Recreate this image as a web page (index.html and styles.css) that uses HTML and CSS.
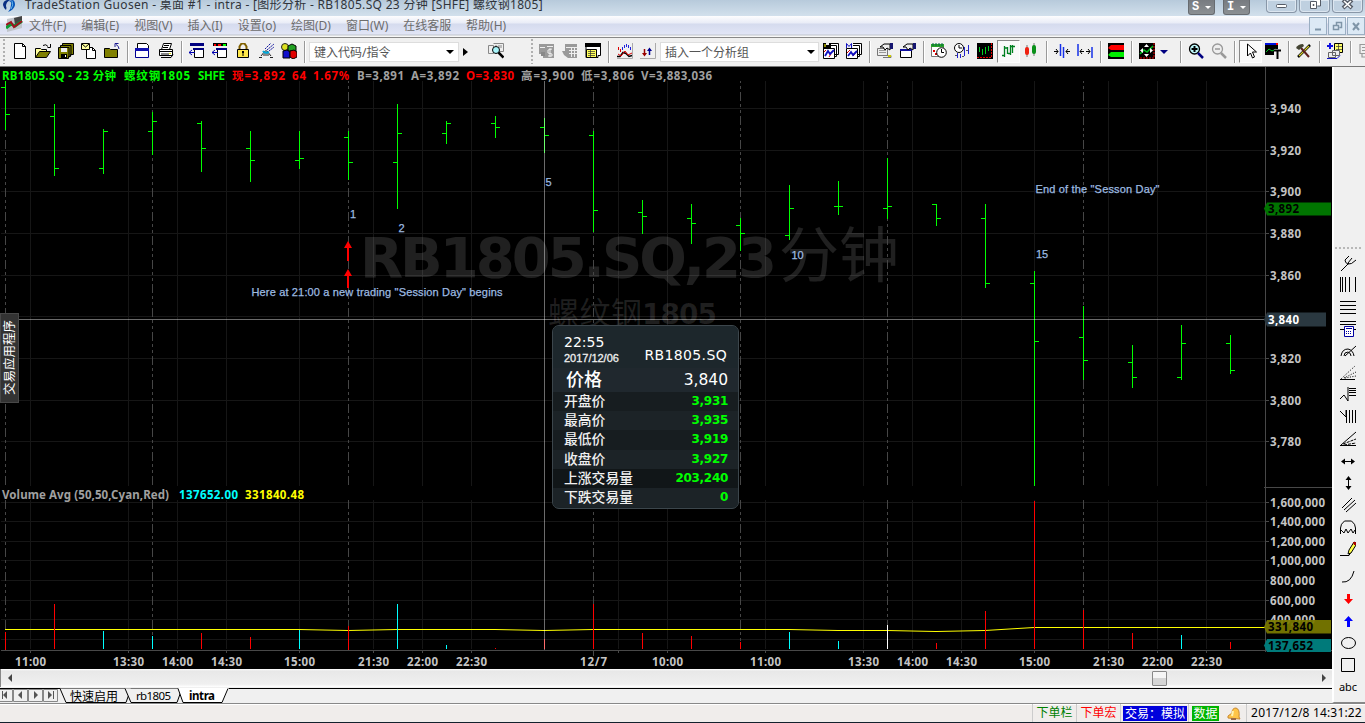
FILE: index.html
```html
<!DOCTYPE html>
<html lang="zh-CN">
<head>
<meta charset="utf-8">
<title>TradeStation Guosen</title>
<link rel="stylesheet" href="styles.css">
</head>
<body>
<div class="app">
<header class="titlebar">
<svg class="logo" width="16" height="16" viewBox="0 0 16 16"><path d="M5 0Q1 1 1 5Q2 9 4 10Q5 8 4 6Q4 2 8 0z" fill="#0a2f82"/><path d="M6 1Q10 1 9 5Q9 9 6 12Q12 10 13 5Q13 1 11 0z" fill="#0755b8"/><path d="M10 1Q12 5 9 9" fill="none" stroke="#5fb4ee"/></svg>
<span class="title">TradeStation Guosen - 桌面 #1 - intra - [图形分析 - RB1805.SQ 23 分钟 [SHFE] 螺纹钢1805]</span>
<div class="badges"><span class="badge">S<i></i></span><span class="badge">I<i></i></span></div>
<div class="winbtns">
<span class="wb"><svg width="29" height="12"><rect x="9.500" y="4.500" width="10" height="3" rx="1" fill="#fff" stroke="#555b66"/></svg></span>
<span class="wb"><svg width="29" height="12"><path d="M13.500 -1h7v7h-3M10.500 1.500h6v7h-6zM13 4.500h1v1h-1z" fill="#fff" stroke="#555b66"/></svg></span>
<span class="wb"><svg width="29" height="12"><path d="M10 0l9 8M19 0l-9 8" stroke="#555b66" stroke-width="4"/><path d="M11 1l7 6.500M18 1l-7 6.500" stroke="#fff" stroke-width="1.600"/></svg></span>
</div>
</header>
<nav class="menubar">
<svg class="mdi" width="17" height="17" viewBox="0 0 17 17"><path d="M1 3L16 0V12L1 16z" fill="#bfc4ca"/><path d="M8 2L16 0V7L9 9z" fill="#444"/><path d="M0 12l5-4 4 2 7-5" fill="none" stroke="#0b9a35" stroke-width="3"/><path d="M0 9l5-3 3 5 8-6" fill="none" stroke="#a31020" stroke-width="2"/></svg>
<span>文件(F)</span><span>编辑(E)</span><span>视图(V)</span><span>插入(I)</span><span>设置(o)</span><span>绘图(D)</span><span>窗口(W)</span><span>在线客服</span><span>帮助(H)</span>
<div class="mdibtns"><span><svg width="17" height="17"><path d="M5 11.500h6" stroke="#7f95a8" stroke-width="2"/></svg></span><span><svg width="17" height="17"><path d="M7.500 7V4.500h5v5h-2M4.500 7.500h5v4h-5z" fill="none" stroke="#7f95a8" stroke-width="1.500"/></svg></span><span><svg width="17" height="17"><path d="M5 5l6 7M11 5l-6 7" stroke="#7f95a8" stroke-width="2"/></svg></span></div>
</nav>
<div class="toolbar">
<i class="grip"></i>
<b class="t"><svg viewBox="0 0 16 16"><path d="M2.500 .500h8l3 3v12h-11z" fill="#fff" stroke="#000"/><path d="M10.500 .500v3h3" fill="none" stroke="#000"/></svg></b>
<b class="t"><svg viewBox="0 0 16 16"><path d="M.500 14.500V5.500h5l1 1h5v2" fill="#ffff9c" stroke="#000"/><path d="M.500 14.500l4-6h11l-4 6z" fill="#808000" stroke="#000"/><path d="M8 2.500q3-2 5 1M15.500 1v3.500h-3" fill="none" stroke="#000"/></svg></b>
<b class="t"><svg viewBox="0 0 16 16"><path d="M4.500 .500h11v11h-3v2h-2v2H.500v-11h2v-2h2z" fill="#808000" stroke="#000"/><path d="M3 2.500h10v10M1 4.500h10v10" fill="none" stroke="#000"/><path d="M3 5h6v4H3z" fill="#eee"/><path d="M3 11h6v4H3z" fill="#000"/><path d="M7 12h1v2H7z" fill="#fff"/></svg></b>
<b class="t"><svg viewBox="0 0 16 16"><path d="M5.500 4.500h6l3 3v8h-9z" fill="#fff" stroke="#000"/><path d="M11.500 4.500v3h3" fill="none" stroke="#000"/><path d="M.500 .500h8v6h-8z" fill="#ffffa0" stroke="#000"/><path d="M1 1l3.500 3L8 1" fill="none" stroke="#000"/></svg></b>
<b class="t"><svg viewBox="0 0 16 16"><path d="M.500 14.500v-9h5l1 1h7v8z" fill="#808000" stroke="#000"/><path d="M15 6q0-3-3-4.500M11 4V.500h3.500" fill="none" stroke="#1a1a90"/></svg></b>
<i class="sep"></i>
<b class="t"><svg viewBox="0 0 16 16"><path d="M2.500 .500h9l2 2v11h-11z" fill="#fff" stroke="#000"/><path d="M.500 5.500h13v9H.500z" fill="#fff" stroke="#000090"/><path d="M0 5h14v3H0z" fill="#1010b0"/></svg></b>
<b class="t"><svg viewBox="0 0 16 16"><path d="M5.500 .500h8l-2 6h-8zM1.500 6.500h13v6h-13z" fill="#fff" stroke="#000"/><path d="M6 2.500h5M5 4.500h5M2 8.500h12M3 14.500h10l2-3" fill="none" stroke="#000"/><path d="M3 10h8v2H3z" fill="#888"/><path d="M11 10h2v1h-2z" fill="#dd0"/></svg></b>
<i class="sep"></i>
<b class="t"><svg viewBox="0 0 16 16"><path d="M1 0h14v3H1z" fill="#000080"/><path d="M5.500 5.500h9v9h-9z" fill="#fff" stroke="#000"/><path d="M4 5h11v2H4z" fill="#000080"/><path d="M0 9.500h6M3 7l-3 2.500L3 12" fill="none" stroke="#0000b0"/></svg></b>
<b class="t"><svg viewBox="0 0 16 16"><path d="M1 0h14v3H1z" fill="#000"/><path d="M2 1h2v2H2z" fill="#f00"/><path d="M6 1h3v2H6z" fill="#f00"/><path d="M11 1h3v2h-3z" fill="#0f0"/><path d="M5.500 5.500h9v9h-9z" fill="#fff" stroke="#000"/><path d="M4 5h11v2H4z" fill="#000080"/><path d="M0 9.500h6M3 7l-3 2.500L3 12" fill="none" stroke="#0000b0"/></svg></b>
<b class="t"><svg viewBox="0 0 16 16"><path d="M4.500 6V3.500l2-3h3l2 3V6" fill="none" stroke="#806000" stroke-width="2"/><path d="M2.500 6.500h11v8h-11z" fill="#ffe84a" stroke="#000"/><path d="M7 8h2v2H7zM7.500 10h1v3h-1z"/></svg></b>
<b class="t"><svg viewBox="0 0 16 16"><path d="M1 14.500h3M12 14.500h3M3 13l4-5h2l4 5M5 12h6M6 10h4" fill="none" stroke="#222"/><path d="M5 8q2 3 6 1" fill="none" stroke="#0ad" stroke-width="2"/><path d="M7 6l6-6M9 7l7-6M11 8l5-4" stroke="#1518a0" stroke-dasharray="2 .7"/></svg></b>
<b class="t"><svg viewBox="0 0 16 16"><circle cx="4" cy="4" r="3.500" fill="#dce020" stroke="#222"/><path d="M7 3l4-2 4 2v5H7z" fill="#21a021" stroke="#000"/><path d="M2 8l4-1 3 2v6H2z" fill="#1010cc" stroke="#000"/><path d="M9 8l4-1 3 2v5l-4 2-3-2z" fill="#e00000" stroke="#000"/></svg></b>
<i class="sep"></i>
<div class="field"><span>键入代码/指令</span><i></i></div>
<b class="play"></b>
<b class="t find"><svg viewBox="0 0 16 16"><path d="M.500 2.500h5v8h-5zM5.500 .500h10v8h-5" fill="#eee" stroke="#888"/><path d="M8 2v3M11 2v3M13 2v3" stroke="#888"/><circle cx="8" cy="7" r="3.500" fill="#a8f4fa" stroke="#000"/><path d="M10.500 9.500l5 5" stroke="#000" stroke-width="2.500"/></svg></b>
<i class="grip grip2"></i>
<b class="t"><svg viewBox="0 0 16 16"><path d="M0 1h15v14H4v-4H0z" fill="#999"/><path d="M1 4.500h5M8 3.500h6M13 6l-4 1v3l4 1v2H9M11 5v9" fill="none" stroke="#eee"/><path d="M2 9h4v4H2z" fill="#888"/></svg></b>
<b class="t"><svg viewBox="0 0 16 16"><path d="M3 1h12v14H6l-4-3-2-4h3z" fill="#999"/><path d="M4 4.500h11M7 7.500h8M7 10.500h8M9.500 5v9M12.500 5v9" stroke="#eee"/></svg></b>
<b class="t"><svg viewBox="0 0 16 16"><path d="M1 .500h14.500v12H13v2H1z" fill="#fff" stroke="#000"/><path d="M0 0h16v4H0z"/><path d="M1.500 6.500h10v8h-10z" fill="#ffff58" stroke="#000"/><path d="M3 8.500h7M3 10.500h7M3 12.500h7M5.500 7v7" stroke="#333" stroke-width=".7"/></svg></b>
<i class="sep s9"></i>
<b class="t"><svg viewBox="0 0 16 16"><path d="M5.500 4v3M7.500 2v3M9.500 1v3M11.500 2v3M13.500 4v3" stroke="#2222dd"/><path d="M1.500 4v3M3.500 6v3" stroke="#d00"/><path d="M0 13.500h3l3-4 3 1 3 3 3-1" fill="none" stroke="#000" stroke-width="1.500"/><path d="M1 11l3 2 4-5 3 4 4-2" fill="none" stroke="#d00"/><path d="M15.500 0v15.500H0" fill="none" stroke="#aaa"/></svg></b>
<b class="t"><svg viewBox="0 0 16 16"><path d="M4.500 6v6" stroke="#900" stroke-width="1.500"/><path d="M2 10h5l-2.500 3.500z" fill="#900"/><path d="M9.500 6v6" stroke="#000090" stroke-width="1.500"/><path d="M7 8l2.500-3.500L12 8z" fill="#000090"/><path d="M15.500 0v15.500H0" fill="none" stroke="#aaa"/></svg></b>
<div class="field f2"><span>插入一个分析组</span><i></i></div>
<b class="t"><svg viewBox="0 0 16 16"><path d="M6 .500h9.500v11H6M4 2.500h9.500v11H4" fill="#fff" stroke="#000"/><path d="M.500 5.500h11v10H.500z" fill="#fff" stroke="#000"/><path d="M0 0h8v6H0z" fill="#000"/><path d="M1 1h2v3H1z" fill="#880"/><path d="M3 0h3v2H3z" fill="#eee"/><path d="M1 9l2-2M6 14l2-3" stroke="#d00"/><path d="M2 13l3-5 2 3 4-4" fill="none" stroke="#1010c0" stroke-width="1.800"/></svg></b>
<b class="t"><svg viewBox="0 0 16 16"><path d="M6 .500h9.500v11H6M4 2.500h9.500v11H4" fill="#fff" stroke="#000"/><path d="M.500 5.500h11v10H.500z" fill="#fff" stroke="#000"/><path d="M0 0h7v5H0z" fill="#f0f0f0"/><path d="M.500 5V.500l2.500 3 2.500-3V5" fill="none" stroke="#1010c0"/><path d="M1 10l3-3M7 13l3-4" stroke="#d00"/><path d="M2 13l3-4 2 3 4-4" fill="none" stroke="#1010c0" stroke-width="1.800"/></svg></b>
<i class="sep"></i>
<b class="t"><svg viewBox="0 0 16 16"><path d="M.500 5.500h10v7H.500zM6 12.500h8v2H6" fill="#eee" stroke="#777"/><path d="M2 7.500h7M2 9.500h7" stroke="#999"/><path d="M3 4l4-3h6v6l-3-2-2 2-2-3z" fill="#eee" stroke="#000"/><path d="M13 0h3v6h-3z" fill="#151570"/><path d="M11 12h3v2h-3z" fill="#cc0"/></svg></b>
<b class="t"><svg viewBox="0 0 16 16"><path d="M.500 6.500h11v8H.500z" fill="#fff" stroke="#000"/><path d="M0 6h12v2H0z" fill="#1010a0"/><path d="M3 4l4-3h6v6l-3-2-2 2-2-3z" fill="#eee" stroke="#000"/><path d="M13 0h3v6h-3z" fill="#151570"/></svg></b>
<i class="sep"></i>
<b class="t"><svg viewBox="0 0 16 16"><path d="M.500 2.500h12v11H.500z" fill="#fff" stroke="#777"/><path d="M0 1h13v3H0z" fill="#29a229"/><path d="M2 7h2v2H2zM4 10h2v2H4z" fill="#d00"/><path d="M2 0v3M5 0v3M8 0v3M11 0v3" stroke="#064"/><circle cx="10.500" cy="9.500" r="4.800" fill="#fff" stroke="#000"/><path d="M10.500 6v3.500H13" fill="none" stroke="#000"/></svg></b>
<b class="t"><svg viewBox="0 0 16 16"><circle cx="5" cy="5" r="4.500" fill="#fff" stroke="#000"/><path d="M5 2v3h3" fill="none" stroke="#000"/><path d="M3.500 10v5M6.500 11v4M10.500 4v9M14.500 2v9" stroke="#2222d0"/><path d="M1 12.500h2M8 13.500h2M12 7.500h2" stroke="#555"/></svg></b>
<b class="t"><svg viewBox="0 0 16 16"><path d="M0 0h16v16H0z"/><path d="M2.500 4v5M5.500 6v6M8.500 4v7M11.500 3v5" stroke="#00d020"/><path d="M14.500 0v14.500H0" fill="none" stroke="#e00" stroke-dasharray="2 1"/></svg></b>
<b class="t on"><svg viewBox="0 0 16 16"><path d="M4.500 3v11M2 12.500h2M4.500 5h3M7.500 4v7M10.500 2v10M8 10.500h2M12.500 2v8M10 3.500h5" fill="none" stroke="#008020" stroke-width="1.300"/></svg></b>
<b class="t"><svg viewBox="0 0 16 16"><path d="M4 2v12M11 0v13" stroke="#777"/><rect x="2" y="4" width="4" height="8" rx="2" fill="#f02010"/><rect x="9" y="2" width="4" height="9" rx="2" fill="#089018"/></svg></b>
<i class="sep"></i>
<b class="t"><svg viewBox="0 0 16 16"><path d="M6.500 1v12M9.500 4v11" stroke="#1530e8" stroke-width="1.500"/><path d="M0 8.500h4M12 8.500h4M2 6l2 2.500L2 11M14 6l-2 2.500 2 2.500" fill="none" stroke="#000"/></svg></b>
<b class="t"><svg viewBox="0 0 16 16"><path d="M1 1v12M15 4v11" stroke="#1530e8" stroke-width="1.500"/><path d="M3 8.500h4M9 8.500h4M5 6L3 8.500 5 11M11 6l2 2.500-2 2.500" fill="none" stroke="#000"/></svg></b>
<i class="sep"></i>
<b class="t"><svg viewBox="0 0 16 16"><path d="M0 0h16v16H0z"/><path d="M0 5l3-3h13v5H3z" fill="#f00"/><path d="M0 12l3-3h13v5H3z" fill="#00ee00"/></svg></b>
<i class="sep"></i>
<b class="t"><svg viewBox="0 0 16 16"><path d="M0 0h16v16H0z"/><path d="M1 11l4-4 3 2 6-6" fill="none" stroke="#00c020" stroke-width="1.500"/><path d="M7.500 1l2.500 3H5zM7.500 14L5 11h5zM1 7.500L4 5v5zM14 7.500L11 5v5z" fill="#fff"/><path d="M15 0v15H0" fill="none" stroke="#e00" stroke-dasharray="2 1"/></svg></b>
<b class="drop"></b>
<i class="sep"></i>
<b class="t"><svg viewBox="0 0 16 16"><circle cx="6.500" cy="6" r="5" fill="#bdf8fa" stroke="#000" stroke-width="1.300"/><path d="M3.500 6h6M6.500 3v6" stroke="#000" stroke-width="2"/><path d="M10 10l5 5" stroke="#000080" stroke-width="2.500"/></svg></b>
<b class="t"><svg viewBox="0 0 16 16"><circle cx="6.500" cy="6" r="5" fill="#eee" stroke="#999" stroke-width="1.300"/><path d="M4 6h5" stroke="#999" stroke-width="1.500"/><path d="M10 10l5 5" stroke="#999" stroke-width="2.500"/></svg></b>
<i class="sep"></i>
<b class="t on"><svg viewBox="0 0 16 16"><path d="M5.500 1v12l3-3 2 5 2-1-2-5h4z" fill="#fff" stroke="#000"/></svg></b>
<b class="t"><svg viewBox="0 0 16 16"><path d="M0 1h13v11H0z"/><path d="M0 0h13v2H0z" fill="#0010e0"/><path d="M11 0h2v2h-2z" fill="#f00"/><path d="M1 9l3-3 3 2 4-2" fill="none" stroke="#00c020"/><path d="M9 6h7v10H9z" fill="#f0f0f0"/><path d="M9 7.500h7M12.500 7v9" stroke="#000" stroke-width="2"/></svg></b>
<i class="sep"></i>
<b class="t"><svg viewBox="0 0 16 16"><path d="M14 2L2 14" stroke="#000" stroke-width="2.500"/><path d="M13 3L3 13" stroke="#d8d030" stroke-width="1.200"/><path d="M5 5l8 9" stroke="#5c2020" stroke-width="2"/><path d="M0 5q2-4 7-4l1 2-5 4z" fill="#443"/></svg></b>
<i class="sep"></i>
<b class="t"><svg viewBox="0 0 16 16"><path d="M7.500 .500h8v9h-8z" fill="#ffff68" stroke="#000"/><path d="M9 3.500h6M9 6.500h6M11.500 1v8" stroke="#333" stroke-width=".7"/><path d="M5.500 7.500h7v5h-7zM1.500 9.500h7v5h-7z" fill="#eee" stroke="#666"/><path d="M0 15.500h10l3-3" fill="none" stroke="#1010c0"/><path d="M3 0v6M0 3h6" stroke="#1010e0" stroke-width="2"/></svg></b>
<i class="sep s9"></i>
<b class="t cut"><svg viewBox="0 0 16 16"><path d="M1 1.500h14v9H1zM3 4.500h11M3 7.500h11M7.500 2v9M3 10v4h10" fill="none" stroke="#999" stroke-width="1.200"/></svg></b>
</div>
<div class="workspace">
<main class="panel">
<div class="chartbox">
<svg class="chart" width="1332" height="602" viewBox="0 67 1332 602">
<rect y="67" width="1332" height="602"/>
<path class="grid" d="M1 108.500H1265M1 150.500H1265M1 191.500H1265M1 233.500H1265M1 275.500H1265M1 316.500H1265M1 358.500H1265M1 400.500H1265M1 441.500H1265M1 502.500H1265M1 521.500H1265M1 541.500H1265M1 560.500H1265M1 580.500H1265M1 600.500H1265M1 619.500H1265M1 639.500H1265"/>
<path class="grid" d="M30.500 81V486M128.500 81V486M177.500 81V486M226.500 81V486M299.500 81V486M373.500 81V486M422.500 81V486M471.500 81V486M618.500 81V486M667.500 81V486M765.500 81V486M863.500 81V486M912.500 81V486M961.500 81V486M1034.500 81V486M1108.500 81V486M1157.500 81V486M1206.500 81V486M30.500 500V649M128.500 500V649M177.500 500V649M226.500 500V649M299.500 500V649M373.500 500V649M422.500 500V649M471.500 500V649M618.500 500V649M667.500 500V649M765.500 500V649M863.500 500V649M912.500 500V649M961.500 500V649M1034.500 500V649M1108.500 500V649M1157.500 500V649M1206.500 500V649"/>
<g class="mark"><text x="360" y="277" font-size="56" textLength="417">RB1805.SQ,23</text><text class="thin" x="779" y="277" font-size="60" textLength="120">分钟</text><text class="thin" x="548" y="324" font-size="31" textLength="94">螺纹钢</text><text x="642" y="324" font-size="28" textLength="75">1805</text></g>
<path class="dash d1" d="M5.500 81V486M152.500 81V486M348.500 81V486M593.500 81V486M740.500 81V486M887.500 81V486M1083.500 81V486"/>
<path class="dash" d="M5.500 500V649M152.500 500V649M348.500 500V649M593.500 500V649M740.500 500V649M887.500 500V649M1083.500 500V649"/>
<path class="axis" d="M1265.500 67V652M1264 487.500H1332M1 650.500H1332M30.500 651v2M128.500 651v2M177.500 651v2M226.500 651v2M299.500 651v2M373.500 651v2M422.500 651v2M471.500 651v2M593.500 651v5M618.500 651v2M667.500 651v2M765.500 651v2M863.500 651v2M912.500 651v2M961.500 651v2M1034.500 651v2M1108.500 651v2M1157.500 651v2M1206.500 651v2M1266 108.500h3M1266 150.500h3M1266 191.500h3M1266 233.500h3M1266 275.500h3M1266 358.500h3M1266 400.500h3M1266 441.500h3M1266 502.500h3M1266 521.500h3M1266 541.500h3M1266 560.500h3M1266 580.500h3M1266 600.500h3"/>
<path class="bars" d="M5.500 81V130M1 87.500h5M5 114.500h5M54.500 104V176M50 116.500h5M54 168.500h5M103.500 129V174M99 168.500h5M103 131.500h5M152.500 112V155M148 131.500h5M152 121.500h5M201.500 121V172M197 123.500h5M201 148.500h5M250.500 131V182M246 148.500h5M250 160.500h5M299.500 131V169M295 160.500h5M299 158.500h5M348.500 131V180M344 137.500h5M348 162.500h5M397.500 104V209M393 162.500h5M397 133.500h5M446.500 121V144M442 133.500h5M446 123.500h5M495.500 116V138M491 123.500h5M495 127.500h5M544.500 118V153M540 127.500h5M544 135.500h5M593.500 131V232M589 135.500h5M593 210.500h5M642.500 200V234M638 212.500h5M642 216.500h5M691.500 204V244M687 218.500h5M691 223.500h5M740.500 218V251M736 225.500h5M740 233.500h5M789.500 185V240M785 235.500h5M789 208.500h5M838.500 181V215M834 206.500h9M887.500 158V219M883 208.500h5M887 206.500h5M936.500 204V226M932 204.500h5M936 218.500h5M985.500 204V288M981 218.500h5M985 283.500h5M1034.500 271V486M1030 283.500h5M1034 341.500h5M1083.500 306V380M1079 337.500h5M1083 360.500h5M1132.500 345V388M1128 362.500h5M1132 377.500h5M1181.500 325V380M1177 377.500h5M1181 343.500h5M1230.500 335V374M1226 343.500h5M1230 370.500h5"/>
<path class="avg" d="M5 629.500H299L348 630.500L397 629.500H495L544 630.500L593 629.500H789L838 630.500H887L936 631.500L985 630.500L1034 627.500H1265"/>
<path class="down" d="M5.500 632V650M54.500 604V649M201.500 633V649M250.500 637V649M348.500 626V650M495.500 648V649M593.500 604V649M642.500 633V649M691.500 636V649M740.500 642V649M936.500 643V649M985.500 611V649M1034.500 501V649M1083.500 610V649M1132.500 633V649M1230.500 642V649M544.500 639V649"/>
<path class="up" d="M103.500 631V649M152.500 636V649M299.500 630V649M397.500 604V649M446.500 645V649M789.500 632V649M838.500 641V649M1181.500 635V649"/>
<path d="M887.500 625V649" stroke="#fff"/>
<path class="cross" d="M544.500 81V650M7 319.500H1265"/>
<path d="M348 241l4 7h-3v13h-2v-13h-3zM348 269l4 7h-3v12h-2v-12h-3z" fill="#f00"/>
<g class="head"><text fill="#0f0" x="2" y="80" textLength="114">RB1805.SQ - 23 分钟</text><text fill="#0f0" x="124" y="80" textLength="66">螺纹钢1805</text><text fill="#0f0" x="198" y="80" textLength="27">SHFE</text><text fill="#f00" x="232" y="80" textLength="53">现=3,892</text><text fill="#f00" x="292" y="80" textLength="14">64</text><text fill="#f00" x="313" y="80" textLength="36">1.67%</text><text x="357" y="80" textLength="47">B=3,891</text><text x="411" y="80" textLength="48">A=3,892</text><text fill="#f00" x="466" y="80" textLength="48">O=3,830</text><text x="521" y="80" textLength="53">高=3,900</text><text x="581" y="80" textLength="53">低=3,806</text><text x="641" y="80" textLength="71">V=3,883,036</text>
<text x="2" y="499" textLength="167">Volume Avg (50,50,Cyan,Red)</text><text x="179" y="499" fill="#0ff" textLength="59">137652.00</text><text x="245" y="499" fill="#ff0" textLength="59">331840.48</text></g>
<g class="note"><text x="350" y="218">1</text><text x="398.500" y="232">2</text><text x="545.500" y="186">5</text><text x="791.500" y="259">10</text><text x="1036" y="258">15</text><text x="251.500" y="296" textLength="251">Here at 21:00 a new trading "Session Day" begins</text><text x="1035.500" y="193" textLength="124">End of the "Sesson Day"</text></g>
<g class="lab"><text x="1270" y="113" textLength="31">3,940</text><text x="1270" y="155" textLength="31">3,920</text><text x="1270" y="196" textLength="31">3,900</text><text x="1270" y="238" textLength="31">3,880</text><text x="1270" y="280" textLength="31">3,860</text><text x="1270" y="363" textLength="31">3,820</text><text x="1270" y="405" textLength="31">3,800</text><text x="1270" y="446" textLength="31">3,780</text><text x="1270" y="507" textLength="55">1,600,000</text><text x="1270" y="526" textLength="55">1,400,000</text><text x="1270" y="546" textLength="55">1,200,000</text><text x="1270" y="565" textLength="55">1,000,000</text><text x="1270" y="585" textLength="45">800,000</text><text x="1270" y="605" textLength="45">600,000</text><text x="1270" y="624" textLength="45">400,000</text>
<text x="15" y="666" textLength="31">11:00</text><text x="113" y="666" textLength="31">13:30</text><text x="162" y="666" textLength="31">14:00</text><text x="211" y="666" textLength="31">14:30</text><text x="284" y="666" textLength="31">15:00</text><text x="358" y="666" textLength="31">21:30</text><text x="407" y="666" textLength="31">22:00</text><text x="456" y="666" textLength="31">22:30</text><text x="580" y="666" textLength="27">12/7</text><text x="652" y="666" textLength="31">10:00</text><text x="750" y="666" textLength="31">11:00</text><text x="848" y="666" textLength="31">13:30</text><text x="897" y="666" textLength="31">14:00</text><text x="946" y="666" textLength="31">14:30</text><text x="1019" y="666" textLength="31">15:00</text><text x="1093" y="666" textLength="31">21:30</text><text x="1142" y="666" textLength="31">22:00</text><text x="1191" y="666" textLength="31">22:30</text></g>
<path d="M1264 208.500l3-6h64v13h-64z" fill="#007400"/><path d="M1264 319.500l3-7h59v14h-59z" fill="#2a3840"/><path d="M1264 627l3-7h64v13.500h-64z" fill="#7a7a00" fill-opacity=".93"/><path d="M1264 645.500l3-6.500h64v13h-64z" fill="#007a7a"/>
<g class="lab tag"><text x="1268" y="213" textLength="31">3,892</text><text x="1268" y="324" textLength="31" class="w">3,840</text><text x="1268" y="631" textLength="45">331,840</text><text x="1268" y="650" textLength="45">137,652</text></g>
</svg>
<div class="sidetab"><span>交易应用程序</span></div>
<section class="tip">
<div class="tip-head"><div><div class="time">22:55</div><div class="date">2017/12/06</div></div><div class="sym">RB1805.SQ</div></div>
<div class="tip-price"><span>价格</span><span class="num">3,840</span></div>
<div class="r"><span>开盘价</span><em>3,931</em></div>
<div class="r alt"><span>最高价</span><em>3,935</em></div>
<div class="r"><span>最低价</span><em>3,919</em></div>
<div class="r alt"><span>收盘价</span><em>3,927</em></div>
<div class="r dk"><span>上涨交易量</span><em>203,240</em></div>
<div class="r alt"><span>下跌交易量</span><em>0</em></div>
</section>
</div>
<div class="hscroll"><i class="la"></i><i class="thumb"></i><i class="ra"></i></div>
<svg class="tabs" width="1332" height="16" viewBox="0 687 1332 16">
<rect y="687" width="1332" height="16" fill="#f0f0f0"/><path d="M0 688.500H1332" stroke="#000"/>
<g fill="#f0f0f0" stroke="#888"><path d="M-2.500 689.500h15v12h-15zM13.500 689.500h14v12h-14zM28.500 689.500h14v12h-14zM43.500 689.500h14v12h-14z"/></g>
<path d="M7 691v8l-4-4zM22 691v8l-4-4zM34 691v8l4-4zM48 691v8l4-4z" fill="#555"/><path d="M2.500 691v8M53.500 691v8" stroke="#555"/>
<path d="M60 688.500l6 14h60l5-14" fill="#f0f0f0" stroke="#000"/><path d="M125 688.500l6 14h46l5-14" fill="#f0f0f0" stroke="#000"/><path d="M178 688l5 14.500h39l7-14.500z" fill="#fff"/><path d="M178 688.500l5 14h39l6-14" fill="none" stroke="#000"/>
<text x="70" y="700.500" textLength="48">快速启用</text><text x="136" y="700" font-size="11.500" textLength="35">rb1805</text><text x="189" y="700" font-size="11.500" font-weight="700" textLength="26">intra</text>
</svg>
</main>
<aside class="rail"><i class="dots"></i>
<b><svg viewBox="0 0 16 16"><path d="M1 16l8-8M9 1L5 5q0 3 3 4 3 1 8-4M12 3L8 8" fill="none" stroke="#000"/></svg></b>
<b><svg viewBox="0 0 16 16"><path d="M.500 0v15M2.500 0v15M5.500 0v15M9.500 0v15M15.500 0v15" stroke="#000"/></svg></b>
<b><svg viewBox="0 0 16 16"><path d="M0 2.500h16M0 6.500h16M0 10.500h16M0 14.500h16" stroke="#000"/></svg></b>
<b><svg viewBox="0 0 16 16"><path d="M0 .500h16M0 3.500h16M0 8.500h16" stroke="#000"/><path d="M4.500 5.500h9v10h-9z" fill="#fff" stroke="#0000a0"/><path d="M6 7.500h6" stroke="#0000a0"/><path d="M6 10.500h6M6 12.500h6" stroke="#0000a0" stroke-dasharray="1 1"/></svg></b>
<b><svg viewBox="0 0 16 16"><path d="M1 13q1-7 7-7 5 1 6 7M4 13q0-4 4-4 3 1 3 4M5 13L16 3" fill="none" stroke="#000"/></svg></b>
<b><svg viewBox="0 0 16 16"><path d="M0 14.500h15" stroke="#000"/><path d="M1 14L15 1M4 13l12-6M5 13l11-2" stroke="#000" stroke-dasharray="1 1.500"/></svg></b>
<b><svg viewBox="0 0 16 16"><path d="M0 12l4-4 4 6V0" fill="none" stroke="#000"/><path d="M9 1.500h7M9 3.500h7M9 5.500h7M9 8.500h7" stroke="#000"/></svg></b>
<b><svg viewBox="0 0 16 16"><path d="M0 2l6 6V1M6.500 1v13M9.500 1v13M12.500 1v13M15.500 1v13" fill="none" stroke="#000"/></svg></b>
<b><svg viewBox="0 0 16 16"><path d="M0 14.500h16M1 14L16 1" stroke="#000"/><path d="M3 13l13-5M4 14l12-2" stroke="#000" stroke-dasharray="3 1"/></svg></b>
<b><svg viewBox="0 0 16 16"><path d="M2 8.500h12" stroke="#000"/><path d="M1 8.500l4-3v6zM15 8.500l-4-3v6z"/></svg></b>
<b><svg viewBox="0 0 16 16"><path d="M8.500 2v12" stroke="#000"/><path d="M8.500 1l3 4h-6zM8.500 15l3-4h-6z"/></svg></b>
<b><svg viewBox="0 0 16 16"><path d="M2 11L12 1M4 13L15 3M6 15L16 6" stroke="#000"/></svg></b>
<b><svg viewBox="0 0 16 16"><path d="M.500 15V9q0-4 4-7h7q4 3 4 7v6M1 11l3 3 2-4 2 4 3-4 2 4 2-3" fill="none" stroke="#000"/></svg></b>
<b><svg viewBox="0 0 16 16"><path d="M0 14.500h9l2-4" fill="none" stroke="#000"/><path d="M8 13l1-4 5-8 2 1v2l-5 8z" fill="#ff4" stroke="#000"/><path d="M13 1h3v3h-2z" fill="#a00"/></svg></b>
<b class="gap"><svg viewBox="0 0 16 16"><path d="M2 14q9 1 12-11" fill="none" stroke="#000"/></svg></b>
<b><svg viewBox="0 0 16 16"><path d="M7 4h3v5h3l-4.500 5L4 9h3z" fill="#f00"/></svg></b>
<b><svg viewBox="0 0 16 16"><path d="M7 15h3V9h3L8.500 4 4 9h3z" fill="#00f"/></svg></b>
<b><svg viewBox="0 0 16 16"><ellipse cx="8.500" cy="9" rx="7" ry="5.500" fill="none" stroke="#000"/></svg></b>
<b><svg viewBox="0 0 16 16"><path d="M1.500 2.500h13v13h-13z" fill="none" stroke="#000"/></svg></b>
<b class="abc">abc</b>
</aside>
</div>
<footer class="status"><span class="g">下单栏</span><span class="rd">下单宏</span><span class="bl"><b>交易：模拟</b></span><span class="gr"><b>数据</b></span><span class="bell"><svg width="14" height="13" viewBox="0 0 14 13"><path d="M1 9l4-3q0-5 4-5 4 1 3 9l1 2-12-1z" fill="#ffc548" stroke="#c88830"/><path d="M6 4l-1 5" stroke="#fff3b0" stroke-width="2"/><path d="M4 11h5v2H4z" fill="#9a6a48"/></svg></span><span class="clock">2017/12/8 14:31:22</span></footer>
</div>
</body>
</html>
```
FILE: styles.css
```css
*{box-sizing:border-box}
body{margin:0;background:#f0f0f0;font-family:"Noto Sans","Noto Sans CJK SC",sans-serif}
svg{display:block}
.app{width:1365px;height:723px;display:flex;flex-direction:column;overflow:hidden}
.titlebar{height:16px;flex:none;display:flex;align-items:flex-start;background:linear-gradient(#b7cadb,#d2e0ec);overflow:hidden;padding-left:2px}
.title{font-size:12px;line-height:16px;height:16px;margin:-3px 0 0 7px;color:#30343a;white-space:nowrap;letter-spacing:.31px}
.badges{display:flex;gap:8px;margin-left:auto;margin-right:16px}
.badge{width:27px;height:15px;background:linear-gradient(#777b80,#8b9093);border:1px solid #676b70;border-top:0;border-radius:0 0 3px 3px;color:#fff;font:bold 12px/13px "Liberation Mono",monospace;display:flex;justify-content:center;align-items:center;gap:6px}
.badge i{border:3px solid transparent;border-top-color:#fff;border-bottom:0}
.winbtns{display:flex;gap:2px;margin-right:2px}
.wb{width:31px;height:13px;border:1px solid #8997a8;border-top:0;border-radius:0 0 4px 4px;background:#bfd0e0;box-shadow:inset 0 0 0 1px #dce6f0}
.menubar{height:21px;flex:none;display:flex;align-items:center;gap:15px;padding-left:6px;background:linear-gradient(#fdfdfe 0,#e9ecf7 7px,#d5dbee 8px,#e1e5f6 18px,#bfc4cc 19px,#f8f8f8 20px);font-size:12px;color:#6d6d6d;white-space:nowrap}
.menubar>span{line-height:18px;letter-spacing:0;margin-right:-.1px;margin-top:-1px}
.mdi{margin-right:-9px;margin-top:-4px}
.mdibtns{display:flex;gap:1px;margin-left:auto;align-self:flex-start;margin-top:1px}
.mdibtns span{width:18px;height:18px;border:1px solid #9aaec2;background:#dce9f5}
.toolbar{height:30px;flex:none;display:flex;align-items:center;background:#f0f0f0;border-top:1px solid #888;border-bottom:1px solid #777;padding:0 0 1px 3px}
.grip{width:2px;height:25px;margin-right:4px;background:repeating-linear-gradient(#b0b0b0 0 2px,#f0f0f0 2px 4px);flex:none}
.toolbar .grip2{margin:0 3px 0 23px}
.t{width:23px;height:23px;flex:none;display:flex;align-items:center;justify-content:center}
.t svg{width:16px;height:16px;flex:none;position:relative;left:-.5px;top:-.5px}
.on{background:#fafafa;border:1px solid;border-color:#888 #fff #fff #888}
.sep{width:8px;height:22px;flex:none;background:linear-gradient(90deg,transparent 3px,#999 3px 4px,#fff 4px 5px,transparent 5px)}
.s9{width:9px}
.field{width:150px;height:20px;flex:none;background:#fff;border:1px solid #ddd;display:flex;align-items:center;justify-content:space-between;padding:0 4px;font-size:12px;color:#555}
.field i{border:4px solid transparent;border-top-color:#000;border-bottom:0}
.f2{width:159px;margin-right:1px;padding-right:3px}
.play{margin-left:4px;border:4px solid transparent;border-left:5px solid #000;border-right:0}
.find{margin-left:17px}
.drop{width:8px;margin:0 9px 0 1px;border:4px solid transparent;border-top-color:#000080;border-bottom:0}
.cut{width:13px;overflow:hidden;justify-content:flex-start;padding-left:3px}
.workspace{display:flex;height:636px;flex:none}
.panel{width:1332px;flex:none;display:flex;flex-direction:column}
.chartbox{position:relative;height:602px;border-left:1px solid #888}
.chart{margin-left:-1px}
.grid{fill:none;stroke:#161616}
.dash{fill:none;stroke:#464646;stroke-dasharray:9 3 3 3 3 3}
.d1{stroke-dashoffset:13}
.axis{fill:none;stroke:#484848}
.bars{fill:none;stroke:#0f0}
.avg{fill:none;stroke:#ff0}
.down{fill:none;stroke:#f00}
.up{fill:none;stroke:#0ff}
.cross{fill:none;stroke:#fff;stroke-opacity:.42}
.mark{fill:#fff;fill-opacity:.125;font-family:"DejaVu Sans","Noto Sans CJK SC",sans-serif;font-weight:700}
.mark .thin{font-family:"Noto Sans CJK SC",sans-serif;font-weight:400}
.head{font-size:11.5px;font-weight:700;fill:#a0a0a0}
.note{font:11px "Liberation Sans",sans-serif;fill:#9dbbe0;stroke:#9dbbe0;stroke-width:.25}
.lab{font-size:11.5px;font-weight:700;fill:#c4c4c4}
.tag{fill:#000}
.w{fill:#fff}
.sidetab{position:absolute;left:-1px;top:246px;width:19px;height:90px;background:#333;border:1px solid #484848;color:#fff;display:flex;align-items:center;justify-content:center;font-size:12.5px}
.sidetab span{writing-mode:vertical-rl;text-orientation:sideways;transform:rotate(180deg);white-space:nowrap;line-height:16px}
.tip{position:absolute;left:551px;top:258px;width:187px;height:184px;border:1px solid #3c464c;border-radius:7px;background:#192125;color:#f0f0f0;overflow:hidden;font-family:"DejaVu Sans","Noto Sans CJK SC",sans-serif}
.tip-head{height:42px;background:#1d272c;display:flex;justify-content:space-between;padding:8px 11px 0 11px}
.time{font-size:14px;line-height:16px;color:#fff}
.date{font:500 11px/16px "Liberation Sans",sans-serif;letter-spacing:-.02px;-webkit-text-stroke:.3px #eee}
.sym{font-size:14px;line-height:16px;margin-top:13px;letter-spacing:.35px;color:#fff}
.tip-price{height:24px;background:#20282e;display:flex;justify-content:space-between;align-items:center;padding:0 10px 0 13px;font-size:18px;line-height:24px;font-weight:500;color:#fff}
.tip-price .num{font-size:15.5px;font-weight:400}
.r{height:19.2px;display:flex;justify-content:space-between;align-items:center;padding:0 10px 0 11px;font-size:13.8px;line-height:19px;font-weight:500;background:#171d20}
.r em{font:700 12px/19px "DejaVu Sans",sans-serif;color:#0f0;letter-spacing:-.3px}
.alt{background:#1c2327}
.dk{background:#111618}
.hscroll{height:18px;background:linear-gradient(#fff,#e8e8e8 2px,#efefef 15px,#fff);display:flex;align-items:center;padding:0 6px 0 7px;border-left:1px solid #888}
.la,.ra{border:4px solid transparent;border-right:4px solid #444;border-left:0}
.thumb{width:15px;height:15px;margin:1px 0 0 1140px;border:1px solid #888;border-radius:1px;background:linear-gradient(#f5f5f5 50%,#d5d5d5 50%)}
.ra{border-left:4px solid #444;border-right:0;margin-left:auto}
.tabs{font-size:12px;overflow:visible}
.rail{width:33px;border-left:2px solid #fff;background:#f0f0f0;display:flex;flex-direction:column;align-items:center;padding:180px 3px 0 0;border-bottom:1px solid #888}
.dots{width:26px;height:2px;margin-bottom:3px;background:repeating-linear-gradient(90deg,#b8b8b8 0 2px,transparent 2px 4px);flex:none}
.rail b{height:22px;width:16px;flex:none;display:flex;align-items:center;justify-content:center}
.rail svg{width:16px;height:16px}
.rail .gap{margin-top:5px}
.rail .abc{font-weight:400;font-size:11px}
.status{height:20px;flex:none;display:flex;justify-content:flex-end;align-items:stretch;background:#f0edeb;border-top:1px solid #888;border-bottom:1px solid #13212c;box-shadow:inset 0 1px #fff;font-size:12px;line-height:18px;white-space:nowrap}
.status span{border-left:1px solid #ccc;text-align:center}
.status b{font-weight:400;color:#fff;display:block;height:15px;line-height:15px;margin-top:2px}
.g{width:44px;color:#008000}
.rd{width:44px;color:#f00}
.bl{width:68px;padding:0 1px 0 2px}
.bl b{background:#0000dc}
.gr{width:33px;padding:0 2px 0 3px}
.gr b{background:#00b400}
.status .bell{width:25px;display:flex;align-items:center;justify-content:center;border:0}
.status .clock{width:119px;letter-spacing:.17px;padding-left:1px}
```
